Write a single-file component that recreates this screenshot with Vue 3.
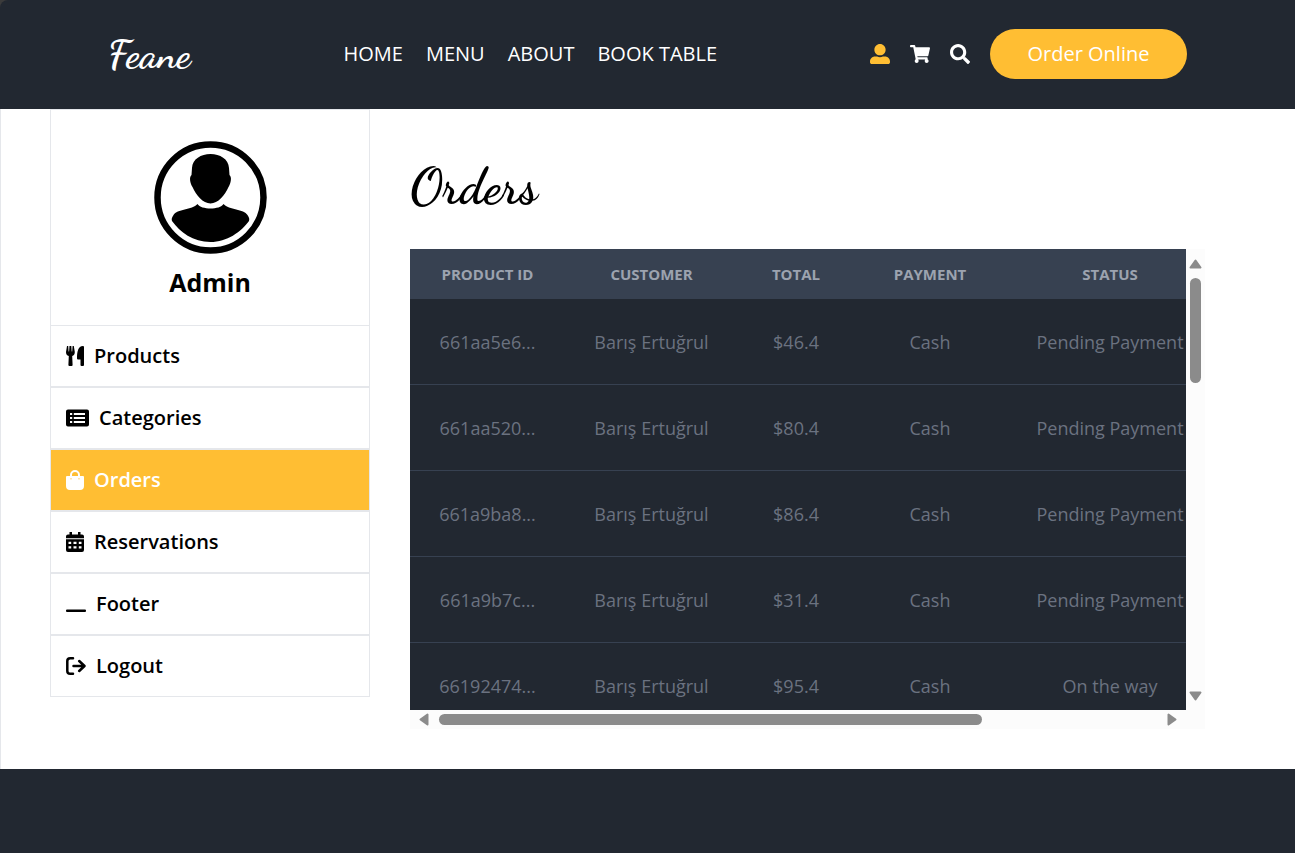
<script setup>
const links = ['HOME', 'MENU', 'ABOUT', 'BOOK TABLE']

const tabs = [
  { name: 'Products', icon: 'utensils', width: 18 },
  { name: 'Categories', icon: 'list', width: 23 },
  { name: 'Orders', icon: 'bag', width: 18, active: true },
  { name: 'Reservations', icon: 'calendar', width: 18 },
  { name: 'Footer', icon: 'line', width: 20 },
  { name: 'Logout', icon: 'exit', width: 20 },
]

const columns = ['PRODUCT ID', 'CUSTOMER', 'TOTAL', 'PAYMENT', 'STATUS']

const orders = [
  ['661aa5e6...', 'Barış Ertuğrul', '$46.4', 'Cash', 'Pending Payment'],
  ['661aa520...', 'Barış Ertuğrul', '$80.4', 'Cash', 'Pending Payment'],
  ['661a9ba8...', 'Barış Ertuğrul', '$86.4', 'Cash', 'Pending Payment'],
  ['661a9b7c...', 'Barış Ertuğrul', '$31.4', 'Cash', 'Pending Payment'],
  ['66192474...', 'Barış Ertuğrul', '$95.4', 'Cash', 'On the way'],
]
</script>

<template>
  <div class="page">
    <header class="header">
      <a class="logo" href="#">Feane</a>
      <nav class="nav">
        <a v-for="link in links" :key="link" href="#">{{ link }}</a>
      </nav>
      <div class="actions">
        <a class="action current" href="#" aria-label="Account">
          <svg viewBox="0 0 512 512" width="20" height="20"><path d="M256 288c79.500 0 144-64.500 144-144S335.500 0 256 0 112 64.500 112 144s64.500 144 144 144zm128 32h-55.100c-22.200 10.200-46.900 16-72.900 16s-50.600-5.800-72.900-16H128C57.300 320 0 377.300 0 448v16c0 26.500 21.500 48 48 48h416c26.500 0 48-21.500 48-48v-16c0-70.700-57.300-128-128-128z" /></svg>
        </a>
        <a class="action" href="#" aria-label="Cart">
          <svg viewBox="0 0 576 512" width="20" height="20"><path d="M528.12 301.319l47.273-208C578.806 78.301 567.391 64 551.99 64H159.208l-9.166-44.81C147.758 8.021 137.93 0 126.529 0H24C10.745 0 0 10.745 0 24v16c0 13.255 10.745 24 24 24h69.883l70.248 343.435C147.325 417.1 136 435.222 136 456c0 30.928 25.072 56 56 56s56-25.072 56-56c0-15.674-6.447-29.835-16.824-40h209.647C430.447 426.165 424 440.326 424 456c0 30.928 25.072 56 56 56s56-25.072 56-56c0-22.172-12.888-41.332-31.579-50.405l5.517-24.276c3.413-15.018-8.002-29.319-23.403-29.319H218.117l-6.545-32h293.145c11.206 0 20.92-7.754 23.403-18.681z" /></svg>
        </a>
        <button class="action" type="button" aria-label="Search">
          <svg viewBox="0 0 512 512" width="20" height="20"><path d="M505 442.700L405.300 343c-4.500-4.500-10.600-7-17-7H372c27.600-35.300 44-79.700 44-128C416 93.100 322.900 0 208 0S0 93.100 0 208s93.100 208 208 208c48.300 0 92.700-16.400 128-44v16.300c0 6.400 2.500 12.500 7 17l99.700 99.700c9.400 9.400 24.600 9.400 33.900 0l28.300-28.300c9.400-9.400 9.400-24.600.1-34zM208 336c-70.700 0-128-57.200-128-128 0-70.700 57.200-128 128-128 70.700 0 128 57.200 128 128 0 70.700-57.200 128-128 128z" /></svg>
        </button>
        <button class="order" type="button">Order Online</button>
      </div>
    </header>

    <main class="main">
      <aside class="sidebar">
        <div class="profile">
          <svg class="avatar" viewBox="0 0 114 114" width="114" height="114" role="img" aria-label="Admin avatar">
            <circle cx="57.500" cy="56.500" r="53" fill="none" stroke="#000" stroke-width="6.500" />
            <path d="M57.500 13C67 13 75.500 18 76 27L76.500 34C79 36 78 42 75.500 46C72 54 65 62.500 57.500 62.500C50 62.500 43 54 39.500 46C37 42 36 36 38.500 34L39 27C39.500 18 48 13 57.500 13Z" />
            <path d="M44.500 63C48 69 67 69 70.500 63C76 69 91 68 94.500 74C96.500 77 96.500 78 96 80C88 91 74 101 57.500 101C40 101 27 91 19 80C18.500 78 18.500 77 20.500 74C24 68 39 69 44.500 63Z" />
          </svg>
          <b>Admin</b>
        </div>
        <ul class="tabs">
          <li v-for="tab in tabs" :key="tab.name">
            <button class="tab" :class="{ active: tab.active }" type="button">
              <svg class="tab-icon" :viewBox="`0 0 ${tab.width} 20`" :width="tab.width" height="20" aria-hidden="true">
                <g v-if="tab.icon === 'utensils'">
                  <path d="M1 0H2.200L2.600 5.500H3.100L3.500 0H5.300L5.700 5.500H6.200L6.600 0H7.800L8.800 6C8.800 8.500 7.800 9.500 6.200 10L6.600 19Q6.600 20 5.600 20H3.400Q2.400 20 2.400 19L2.800 10C1 9.500 0 8.500 0 6Z" />
                  <path d="M18 1V19Q18 20 17 20H15.500Q14.500 20 14.500 19V13.500H12Q11 13.500 11 12.500C11 6 12 0 17 0Q18 0 18 1Z" />
                </g>
                <path v-else-if="tab.icon === 'list'" fill-rule="evenodd" d="M2 1.500H21Q23 1.500 23 3.500V16.500Q23 18.500 21 18.500H2Q0 18.500 0 16.500V3.500Q0 1.500 2 1.500ZM4 5V7H6.200V5ZM7.800 5V7H19V5ZM4 9V11H6.200V9ZM7.800 9V11H19V9ZM4 13V15H6.200V13ZM7.800 13V15H19V13Z" />
                <g v-else-if="tab.icon === 'bag'">
                  <path d="M5 8V5a4 4 0 0 1 8 0V8" fill="none" stroke="currentColor" stroke-width="2" />
                  <path fill-rule="evenodd" d="M1 6H17Q18 6 18 7V16Q18 20 14 20H4Q0 20 0 16V7Q0 6 1 6ZM4.200 8.500V9.300H5.800V8.500ZM12.200 8.500V9.300H13.800V8.500Z" />
                </g>
                <path v-else-if="tab.icon === 'calendar'" fill-rule="evenodd" d="M3.500 0H6V2.500H12V0H14.500V2.500H16Q18 2.500 18 4.500V6.300H0V4.500Q0 2.500 2 2.500H3.500ZM0 7.300H18V18Q18 20 16 20H2Q0 20 0 18ZM2.500 9.800V12H5.200V9.800ZM7.500 9.800V12H10.500V9.800ZM12.800 9.800V12H15.500V9.800ZM2.500 14.200V16.600H5.200V14.200ZM7.500 14.200V16.600H10.500V14.200ZM12.800 14.200V16.600H15.500V14.200Z" />
                <rect v-else-if="tab.icon === 'line'" x="0" y="15.500" width="20" height="2.500" rx="1" />
                <path v-else d="M7 2.200H4.200Q1.300 2.200 1.300 5V15Q1.300 17.800 4.200 17.800H7M7.500 10H18M13.200 5L18.500 10L13.200 15" fill="none" stroke="currentColor" stroke-width="2.500" stroke-linejoin="round" stroke-linecap="round" />
              </svg>
              <span>{{ tab.name }}</span>
            </button>
          </li>
        </ul>
      </aside>

      <section class="content">
        <h1>Orders</h1>
        <div class="scroller">
          <div class="viewport">
            <table>
              <colgroup>
                <col class="c-id" /><col class="c-customer" /><col class="c-total" /><col class="c-payment" /><col class="c-status" />
              </colgroup>
              <thead>
                <tr><th v-for="column in columns" :key="column" scope="col">{{ column }}</th></tr>
              </thead>
              <tbody>
                <tr v-for="order in orders" :key="order[0]">
                  <td v-for="(cell, i) in order" :key="i">{{ cell }}</td>
                </tr>
              </tbody>
            </table>
          </div>
          <div class="bar vertical" aria-hidden="true">
            <svg width="13" height="10" viewBox="0 0 13 10"><path d="M6.500 1.500L11.500 8.500H1.500Z" /></svg>
            <div class="track"><div class="thumb"></div></div>
            <svg width="13" height="10" viewBox="0 0 13 10"><path d="M6.500 8.500L11.500 1.500H1.500Z" /></svg>
          </div>
          <div class="bar horizontal" aria-hidden="true">
            <svg width="10" height="13" viewBox="0 0 10 13"><path d="M1.500 6.500L8.500 1.500V11.500Z" /></svg>
            <div class="track"><div class="thumb"></div></div>
            <svg width="10" height="13" viewBox="0 0 10 13"><path d="M8.500 6.500L1.500 1.500V11.500Z" /></svg>
          </div>
          <div class="corner"></div>
        </div>
      </section>
    </main>

    <footer class="footer"></footer>
  </div>
</template>

<style>
body {
  background: #3b3b3b;
}
</style>

<style scoped>
.page {
  display: flex;
  flex-direction: column;
  min-height: 100vh;
  color: #000;
  font-family: "Open Sans", "Noto Sans", sans-serif;
  font-size: 20px;
}
.page * {
  box-sizing: border-box;
}
a {
  color: inherit;
  text-decoration: none;
}
button {
  border: 0;
  padding: 0;
  background: none;
  color: inherit;
  font: inherit;
  cursor: pointer;
}
svg {
  display: block;
  fill: currentColor;
}
.header {
  display: flex;
  align-items: center;
  justify-content: space-between;
  padding: 29px 108px 30px;
  border-top-left-radius: 8px;
  background: #222831;
  color: #fff;
}
.logo {
  font-family: "Dancing Script", cursive;
  font-size: 40px;
  font-weight: 700;
  line-height: 48px;
}
.nav {
  display: flex;
  gap: 23px;
  line-height: 50px;
}
.actions {
  display: flex;
  align-items: center;
  gap: 20px;
}
.current {
  color: #ffbe33;
}
.order {
  min-width: 197px;
  padding: 0 20px;
  border-radius: 25px;
  background: #ffbe33;
  line-height: 50px;
}
.main {
  display: flex;
  gap: 40px;
  padding: 0 90px 40px 49px;
  border-left: 1px solid #e5e7eb;
  background: #fff;
}
.sidebar {
  flex: 0 0 320px;
}
.profile {
  display: flex;
  flex-direction: column;
  align-items: center;
  gap: 9px;
  padding: 31px 0 24px;
  border: 1px solid #e5e7eb;
  border-bottom: 0;
  font-size: 25px;
  line-height: 37px;
}
.profile b {
  font-weight: 700;
}
.tabs {
  margin: 0;
  padding: 0;
  list-style: none;
}
.tab {
  display: flex;
  align-items: center;
  gap: 10px;
  width: 100%;
  padding: 15px;
  border: 1px solid #e5e7eb;
  font-weight: 600;
  line-height: 30px;
}
.tab.active {
  background: #ffbe33;
  color: #fff;
}
.content {
  flex: 1;
  min-width: 0;
  padding-top: 40px;
}
h1 {
  margin: 0 0 24px;
  font-family: "Dancing Script", cursive;
  font-size: 50px;
  font-weight: 700;
  line-height: 76px;
}
.scroller {
  display: grid;
  grid-template-columns: minmax(0, 1fr) 19px;
  grid-template-rows: 461px 19px;
}
.viewport {
  overflow: hidden;
  background: #222831;
}
table {
  width: 804px;
  border-collapse: separate;
  border-spacing: 0;
  table-layout: fixed;
  text-align: center;
  white-space: nowrap;
}
.c-id { width: 155px; }
.c-customer { width: 173px; }
.c-total { width: 116px; }
.c-payment { width: 152px; }
.c-status { width: 208px; }
th {
  height: 50px;
  padding: 0;
  background: #374151;
  color: #9ca3af;
  font-size: 15px;
  font-weight: 700;
}
td {
  height: 86px;
  padding: 0;
  border-bottom: 1px solid #374151;
  color: #6b7280;
  font-size: 18px;
}
.bar {
  display: flex;
  align-items: center;
  background: #fcfcfc;
  color: #8b8b8b;
}
.bar path {
  stroke: currentColor;
  stroke-width: 2;
  stroke-linejoin: round;
}
.vertical {
  flex-direction: column;
  padding: 10px 0 9px;
}
.horizontal {
  padding: 0 9px;
}
.track {
  flex: 1;
}
.vertical .track {
  padding: 9px 0;
}
.horizontal .track {
  padding: 0 10px;
}
.thumb {
  border-radius: 6px;
  background: #8b8b8b;
}
.vertical .thumb {
  width: 11px;
  height: 105px;
}
.horizontal .thumb {
  width: 75.6%;
  height: 11px;
}
.corner {
  background: #fcfcfc;
}
.footer {
  flex: 1;
  min-height: 84px;
  background: #222831;
}
</style>
